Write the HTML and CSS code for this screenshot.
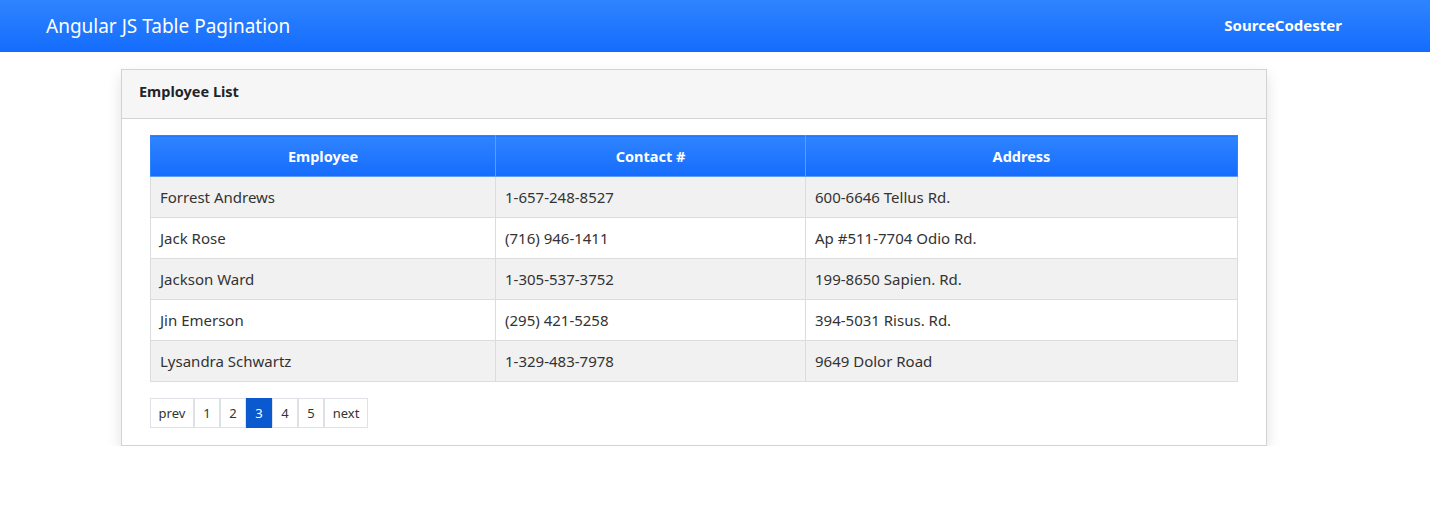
FILE: index.html
```html
<!DOCTYPE html>
<html lang="en">
<head>
    <meta charset="UTF-8">
    <meta name="viewport" content="width=device-width, initial-scale=1.0">
    <title>Angular JS Table Pagination</title>
    <link rel="stylesheet" href="styles.css">
</head>
<body>
    <nav class="topbar">
        <span class="brand">Angular JS Table Pagination</span>
        <span class="site">SourceCodester</span>
    </nav>

    <main class="page">
        <div class="card">
            <div class="card-header">Employee List</div>
            <div class="card-body">
                <table class="emp-table">
                    <thead>
                        <tr>
                            <th class="col-name">Employee</th>
                            <th class="col-contact">Contact #</th>
                            <th>Address</th>
                        </tr>
                    </thead>
                    <tbody>
                        <tr><td>Forrest Andrews</td><td>1-657-248-8527</td><td>600-6646 Tellus Rd.</td></tr>
                        <tr><td>Jack Rose</td><td>(716) 946-1411</td><td>Ap #511-7704 Odio Rd.</td></tr>
                        <tr><td>Jackson Ward</td><td>1-305-537-3752</td><td>199-8650 Sapien. Rd.</td></tr>
                        <tr><td>Jin Emerson</td><td>(295) 421-5258</td><td>394-5031 Risus. Rd.</td></tr>
                        <tr><td>Lysandra Schwartz</td><td>1-329-483-7978</td><td>9649 Dolor Road</td></tr>
                    </tbody>
                </table>

                <!-- pagination -->
                <ul class="pager">
                    <li class="pw"><a href="#">prev</a></li>
                    <li><a href="#">1</a></li>
                    <li><a href="#">2</a></li>
                    <li class="active"><a href="#">3</a></li>
                    <li><a href="#">4</a></li>
                    <li><a href="#">5</a></li>
                    <li class="pw"><a href="#">next</a></li>
                </ul>
            </div>
        </div>
    </main>
</body>
</html>
```

FILE: styles.css
```css
body {
    margin: 0;
    font-family: "Noto Sans", "Open Sans", sans-serif;
    color: #212529;
    background: #fff;
}

.topbar {
    height: 52px;
    display: flex;
    align-items: center;
    justify-content: space-between;
    padding: 0 88px 0 46px;
    background: linear-gradient(180deg, #2f84fe, #156cfd);
    color: #fff;
}

.brand {
    font-size: 19px;
    padding-bottom: 1px;
}

.site {
    font-size: 15px;
    font-weight: 700;
    padding-bottom: 2px;
}

.page {
    padding: 17px 0 0 121px;
}

.card {
    width: 1144px;
    border: 1px solid #d3d3d3;
    background: #fff;
    box-shadow: 0 6px 14px rgba(0, 0, 0, 0.12);
}

.card-header {
    height: 37px;
    padding: 11px 17px 0;
    background: #f6f6f6;
    border-bottom: 1px solid #d3d3d3;
    font-size: 14.5px;
    font-weight: 700;
}

.card-body {
    padding: 16px 28px 17px 28px;
}

.emp-table {
    width: 1088px;
    table-layout: fixed;
    border-collapse: collapse;
    font-size: 15px;
}

.emp-table th {
    height: 40px;
    padding: 0;
    background: linear-gradient(180deg, #2f84fe, #156cfd);
    color: #fff;
    font-size: 14.5px;
    font-weight: 700;
    text-align: center;
    border: 1px solid #5d9cfb;
    border-top-color: #2f84fe;
}

.emp-table th:first-child { border-left-color: #2f84fe; }
.emp-table th:last-child { border-right-color: #2f84fe; }

.col-name { width: 344px; }
.col-contact { width: 309px; }

.emp-table td {
    height: 40px;
    padding: 0 9px;
    border: 1px solid #dcdcdc;
    color: #333;
}

.emp-table tbody tr:nth-child(odd) td {
    background: #f1f1f1;
}

.pager {
    display: flex;
    list-style: none;
    margin: 16px 0 0;
    padding: 0;
}

.pager li a {
    display: flex;
    align-items: center;
    justify-content: center;
    width: 24px;
    height: 28px;
    border: 1px solid #dee2e6;
    color: #333;
    text-decoration: none;
    font-size: 13px;
    background: #fff;
}

.pager li.pw a { width: 42px; }

.pager li.active a {
    background: #0b59cf;
    border-color: #0b59cf;
    color: #fff;
}
```
